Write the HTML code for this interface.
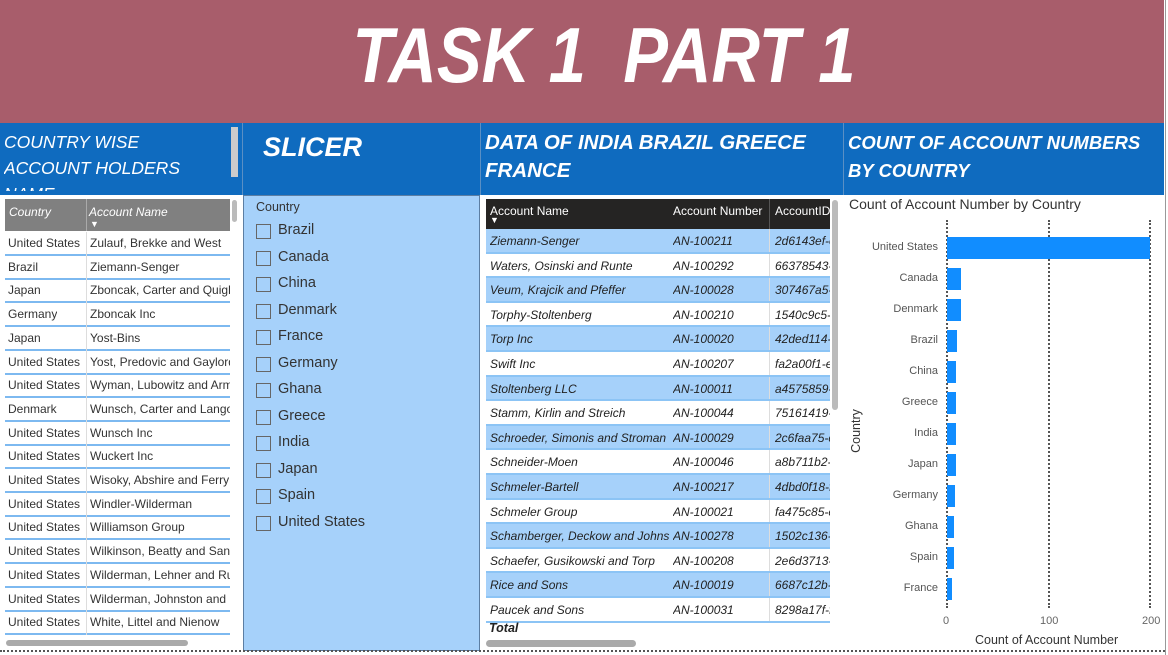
<!DOCTYPE html>
<html><head><meta charset="utf-8"><style>
*{margin:0;padding:0;box-sizing:border-box}
body{width:1168px;height:655px;background:#fff;position:relative;overflow:hidden;font-family:"Liberation Sans",sans-serif;}
.a{position:absolute}
.hdr{left:0;top:0;width:1164px;height:123px;background:#A85D6B}
.title{top:10px;width:1208px;text-align:center;color:#fff;font:italic bold 78px "Liberation Sans",sans-serif;transform:scaleX(0.86);transform-origin:center;white-space:pre}
.bar{top:123px;height:72px;background:#0F6BBF;left:0;width:1164px}
.ht{color:#fff;font-style:italic;font-weight:bold;font-size:21px;line-height:28px}
.row{position:absolute;left:5px;width:225px;height:24px;border-bottom:2px solid #7DB9F0;font-size:12px;color:#333}
.row span{position:absolute;top:4px;white-space:nowrap;overflow:hidden}
.sl{position:absolute;left:256px;font-size:14.5px;color:#333}
.sl i{position:absolute;left:0;top:2px;width:15px;height:15px;border:1px solid #666;}
.sl b{font-weight:normal;position:absolute;left:22px;white-space:nowrap;top:0px}
.mr{position:absolute;left:486px;width:344px;height:24.6px;font-size:12px;font-style:italic;color:#222;border-bottom:2px solid #8CC4F5;overflow:hidden}
.mr span{position:absolute;top:5px;white-space:nowrap;overflow:hidden}
.cl{position:absolute;width:90px;left:848px;text-align:right;font-size:11px;color:#555}
.cb{position:absolute;left:947px;height:22px;background:#118DFF}
.grid{position:absolute;top:220px;height:388px;border-left:2px dotted #555}
</style></head><body>
<div class="a hdr"></div>
<div class="a title" style="left:0px">TASK 1  PART 1</div>
<div class="a" style="left:1165px;top:0;width:1px;height:655px;background:#999"></div>
<div class="a bar"></div>
<div class="a" style="left:242px;top:123px;width:1px;height:72px;background:#5a8fc4"></div>
<div class="a" style="left:480px;top:123px;width:1px;height:72px;background:#5a8fc4"></div>
<div class="a" style="left:843px;top:123px;width:1px;height:72px;background:#5a8fc4"></div>
<div class="a ht" style="left:4px;top:129px;font-weight:normal;font-size:17.5px;line-height:26px;height:62px;overflow:hidden;width:200px">COUNTRY WISE ACCOUNT HOLDERS NAME</div>
<div class="a" style="left:231px;top:127px;width:7px;height:50px;background:#ccc"></div>
<div class="a ht" style="left:263px;top:133px;font-size:27px">SLICER</div>
<div class="a ht" style="left:485px;top:129px;font-size:20.5px">DATA OF INDIA BRAZIL GREECE<br>FRANCE</div>
<div class="a ht" style="left:848px;top:129px;font-size:18.5px">COUNT OF ACCOUNT NUMBERS<br>BY COUNTRY</div>

<div class="a" style="left:5px;top:199px;width:225px;height:32px;background:#808080;color:#fff;font-size:12px;font-style:italic">
<span class="a" style="left:4px;top:6px">Country</span>
<span class="a" style="left:81px;top:0;width:1px;height:32px;background:#aaa"></span>
<span class="a" style="left:84px;top:6px">Account Name</span>
<span class="a" style="left:85px;top:20px;font-size:9px;font-style:normal">▼</span></div>
<div class="a" style="left:232px;top:200px;width:5px;height:22px;background:#bbb;border-radius:3px"></div>
<div id="lt"></div>
<div class="a" style="left:6px;top:640px;width:182px;height:6px;background:#aaa;border-radius:3px"></div>

<div class="a" style="left:243px;top:195px;width:237px;height:456px;background:#A6D1FA;border:1px solid #5c7ea3"></div>
<div class="a" style="left:256px;top:200px;font-size:12.5px;color:#333">Country</div>
<div id="sl"></div>

<div class="a" style="left:486px;top:199px;width:344px;height:30px;background:#252423;color:#fff;font-size:12px">
<span class="a" style="left:4px;top:5px">Account Name</span>
<span class="a" style="left:4px;top:16px;font-size:9px">▼</span>
<span class="a" style="left:187px;top:5px">Account Number</span>
<span class="a" style="left:283px;top:0;width:1px;height:30px;background:#555"></span>
<span class="a" style="left:289px;top:5px">AccountID</span></div>
<div id="mt"></div>
<div class="a" style="left:832px;top:200px;width:6px;height:210px;background:#bbb;border-radius:3px"></div>
<div class="a" style="left:489px;top:621px;font-size:12.5px;font-weight:bold;font-style:italic;color:#222">Total</div>
<div class="a" style="left:486px;top:640px;width:150px;height:7px;background:#aaa;border-radius:4px"></div>

<div class="a" style="left:849px;top:196px;font-size:14px;color:#333">Count of Account Number by Country</div>
<div class="grid" style="left:946px"></div>
<div class="grid" style="left:1048px"></div>
<div class="grid" style="left:1149px"></div>
<div id="ch"></div>
<div class="a" style="left:943px;top:615px;font-size:11px;color:#666">0</div>
<div class="a" style="left:1040px;top:615px;font-size:11px;color:#666">100</div>
<div class="a" style="left:1142px;top:615px;font-size:11px;color:#666">200</div>
<div class="a" style="left:975px;top:633px;font-size:12.5px;color:#333">Count of Account Number</div>
<div class="a" style="left:826px;top:424px;font-size:12.5px;color:#333;transform:rotate(-90deg);transform-origin:center;width:60px;text-align:center">Country</div>

<div class="a" style="left:0;top:650px;width:1165px;border-top:2px dotted #555"></div>
<script>
var L=[["United States","Zulauf, Brekke and West"],["Brazil","Ziemann-Senger"],["Japan","Zboncak, Carter and Quigley"],["Germany","Zboncak Inc"],["Japan","Yost-Bins"],["United States","Yost, Predovic and Gaylord"],["United States","Wyman, Lubowitz and Armstrong"],["Denmark","Wunsch, Carter and Langosh"],["United States","Wunsch Inc"],["United States","Wuckert Inc"],["United States","Wisoky, Abshire and Ferry"],["United States","Windler-Wilderman"],["United States","Williamson Group"],["United States","Wilkinson, Beatty and Sanford"],["United States","Wilderman, Lehner and Runte"],["United States","Wilderman, Johnston and Mills"],["United States","White, Littel and Nienow"]];
var h="";L.forEach(function(r,i){var t=232+i*23.7;h+='<div class="row" style="top:'+t+'px"><span style="left:3px">'+r[0]+'</span><span style="left:81px;top:0;width:1px;height:24px;background:#ddd"></span><span style="left:85px;width:140px">'+r[1]+'</span></div>';});
document.getElementById("lt").innerHTML=h;
var S=["Brazil","Canada","China","Denmark","France","Germany","Ghana","Greece","India","Japan","Spain","United States"];
h="";S.forEach(function(s,i){h+='<div class="sl" style="top:'+(222+i*26.5)+'px"><i></i><b>'+s+'</b></div>';});
document.getElementById("sl").innerHTML=h;
var M=[["Ziemann-Senger","AN-100211","2d6143ef-e"],["Waters, Osinski and Runte","AN-100292","66378543-"],["Veum, Krajcik and Pfeffer","AN-100028","307467a5-"],["Torphy-Stoltenberg","AN-100210","1540c9c5-e"],["Torp Inc","AN-100020","42ded114-"],["Swift Inc","AN-100207","fa2a00f1-e"],["Stoltenberg LLC","AN-100011","a4575859-"],["Stamm, Kirlin and Streich","AN-100044","75161419-"],["Schroeder, Simonis and Stroman","AN-100029","2c6faa75-c"],["Schneider-Moen","AN-100046","a8b711b2-"],["Schmeler-Bartell","AN-100217","4dbd0f18-f"],["Schmeler Group","AN-100021","fa475c85-e"],["Schamberger, Deckow and Johns","AN-100278","1502c136-"],["Schaefer, Gusikowski and Torp","AN-100208","2e6d3713-"],["Rice and Sons","AN-100019","6687c12b-"],["Paucek and Sons","AN-100031","8298a17f-f"]];
h="";M.forEach(function(r,i){var t=229+i*24.6;h+='<div class="mr" style="top:'+t+'px;background:'+(i%2?'#fff':'#A6D1FA')+'"><span style="left:4px;width:180px">'+r[0]+'</span><span style="left:187px">'+r[1]+'</span><span style="left:283px;top:0;width:1px;height:24px;background:#ddd"></span><span style="left:289px">'+r[2]+'</span></div>';});
document.getElementById("mt").innerHTML=h;
var C=[["United States",203],["Canada",14],["Denmark",14],["Brazil",10],["China",9],["Greece",9],["India",9],["Japan",9],["Germany",8],["Ghana",7],["Spain",7],["France",5]];
h="";C.forEach(function(c,i){var y=248+i*31;h+='<div class="cl" style="top:'+(y-7)+'px">'+c[0]+'</div><div class="cb" style="top:'+(y-11)+'px;width:'+c[1]+'px"></div>';});
document.getElementById("ch").innerHTML=h;
</script>
</body></html>
